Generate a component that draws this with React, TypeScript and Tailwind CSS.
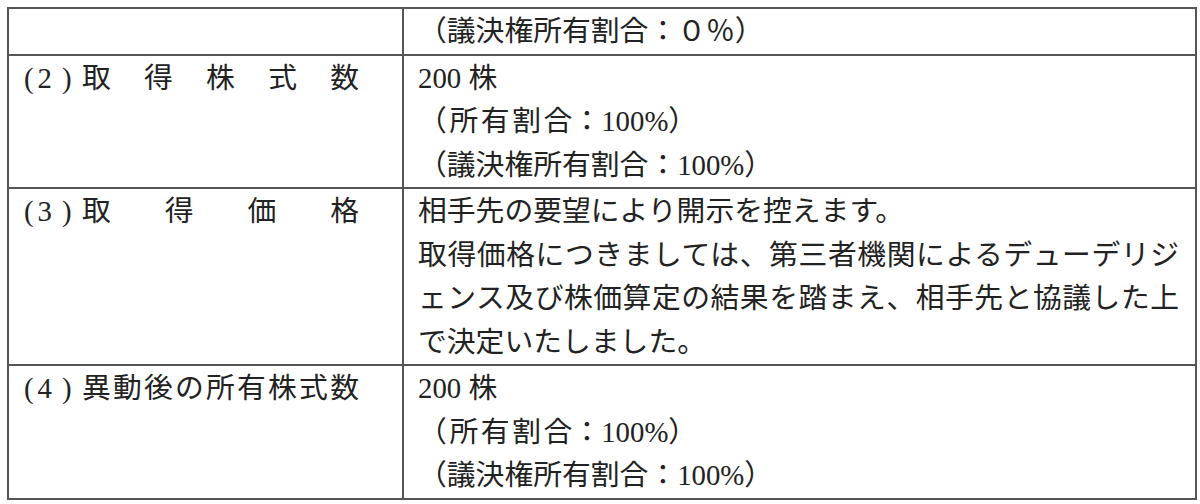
import type { ReactNode } from 'react'

// 「（所有割合：100%）」は原本で字間が広い
const ratio = (
  <>
    <span className="tracking-[2.6px]">（所有割</span>
    合：100%）
  </>
)

const rows: { no: string; label: string; lines: ReactNode[]; full?: number[] }[] = [
  { no: '', label: '', lines: ['（議決権所有割合：０％）'] },
  {
    no: '2',
    label: '取得株式数',
    lines: ['200 株', ratio, '（議決権所有割合：100%）'],
  },
  {
    no: '3',
    label: '取得価格',
    lines: [
      '相手先の要望により開示を控えます。',
      '取得価格につきましては、第三者機関によるデューデリジ',
      'ェンス及び株価算定の結果を踏まえ、相手先と協議した上',
      'で決定いたしました。',
    ],
    full: [1, 2],
  },
  {
    no: '4',
    label: '異動後の所有株式数',
    lines: ['200 株', ratio, '（議決権所有割合：100%）'],
  },
]

function Label({ no, label }: { no: string; label: string }) {
  if (!no) return null
  return (
    <div className="flex">
      <div className="flex w-[73px] shrink-0 pl-[15px]">
        <span>(</span>
        <span className="ml-[4px]">{no}</span>
        <span className="ml-[10px]">)</span>
      </div>
      <div className="flex w-[277px] justify-between">
        {label.split('').map((ch, i) => (
          <span key={i}>{ch}</span>
        ))}
      </div>
    </div>
  )
}

export default function App() {
  return (
    <div className="h-[504px] w-[1200px] bg-white pl-[7px] pt-[7px] font-['Liberation_Serif','Noto_Sans_CJK_JP',serif] text-[28.8px] leading-[43.5px] text-[#222]">
      <div className="w-[1190px] border-2 border-[#555]">
        {rows.map((row, r) => (
          <div
            key={r}
            className={`grid grid-cols-[395px_1fr] ${r < rows.length - 1 ? 'border-b-2 border-[#555]' : ''}`}
          >
            <div className="border-r-2 border-[#555] pt-px">
              <Label no={row.no} label={row.label} />
            </div>
            <div className="pl-[14px] pr-[16px] pt-px">
              {row.lines.map((line, i) => (
                <div
                  key={i}
                  className={row.full?.includes(i) ? 'text-justify [text-align-last:justify]' : ''}
                >
                  {line}
                </div>
              ))}
            </div>
          </div>
        ))}
      </div>
    </div>
  )
}
